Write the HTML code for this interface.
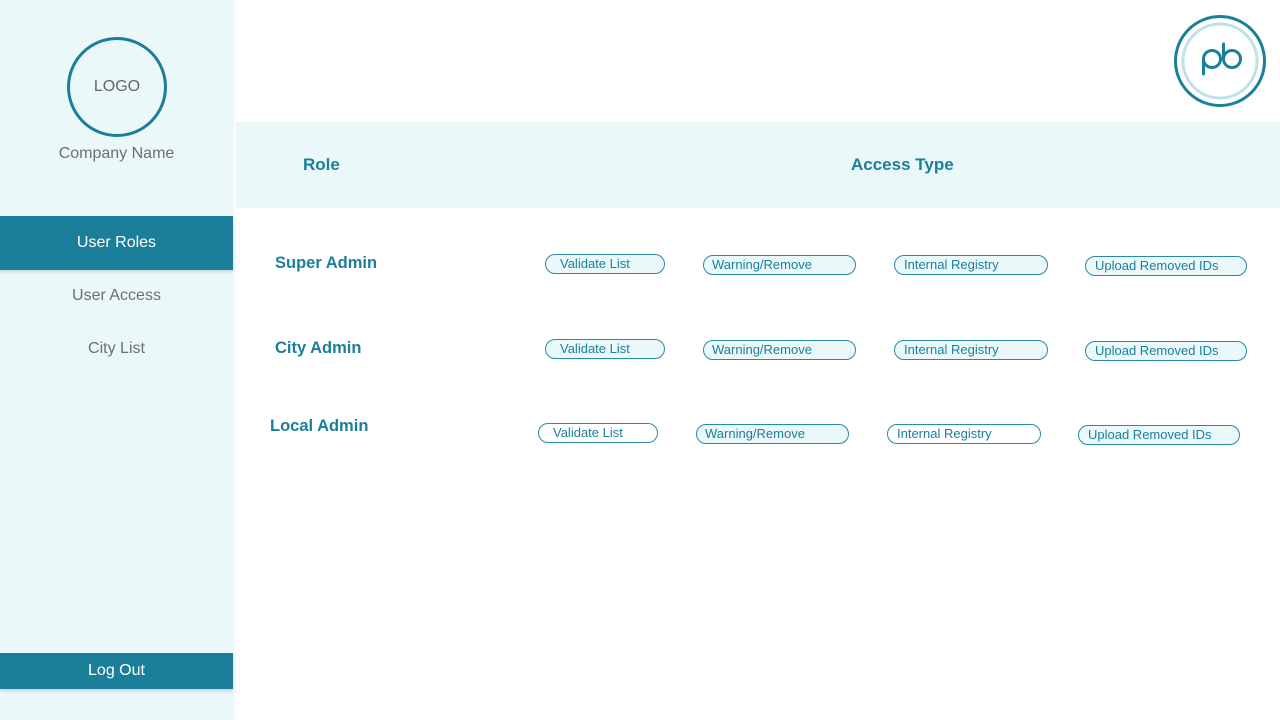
<!DOCTYPE html>
<html><head><meta charset="utf-8"><style>
*{margin:0;padding:0;box-sizing:border-box}
body{width:1280px;height:720px;position:relative;background:#fff;font-family:"Liberation Sans",sans-serif;overflow:hidden}
.a{position:absolute}
.side{left:0;top:0;width:233px;height:720px;background:#eaf8fa;box-shadow:2px 0 3px rgba(0,0,0,0.04)}
.logo{left:67px;top:37px;width:100px;height:100px;border:3px solid #1b7f99;border-radius:50%;color:#666;font-size:16px;display:flex;align-items:center;justify-content:center}
.cn{left:0;width:233px;top:145px;text-align:center;color:#6e6e6e;font-size:16px}
.nav{left:0;width:233px;text-align:center;font-size:16px;color:#6e6e6e}
.act{background:#1b7f99;color:#fff;box-shadow:0 2px 3px rgba(0,0,0,0.15)}
.hdr{left:236px;top:122px;width:1044px;height:86px;background:#eaf8fa}
.h{color:#1b7f99;font-weight:bold;font-size:17px}
.r{color:#1b7f99;font-weight:bold;font-size:16.5px}
.p{height:20px;border:1px solid #2a8aa3;border-radius:10px;background:#eaf8fa;color:#1b7f99;font-size:13px;padding-left:14px;line-height:18px;white-space:nowrap}
</style></head><body>
<div class="a side"></div>
<div class="a logo">LOGO</div>
<div class="a cn">Company Name</div>
<div class="a nav act" style="top:216px;height:54px;line-height:54px">User Roles</div>
<div class="a nav" style="top:287px">User Access</div>
<div class="a nav" style="top:340px">City List</div>
<div class="a nav act" style="top:653px;height:36px;line-height:36px">Log Out</div>

<svg class="a" style="left:1173px;top:14px" width="94" height="94" viewBox="0 0 94 94">
<circle cx="47" cy="47" r="44.5" fill="none" stroke="#1b7f99" stroke-width="3"/>
<circle cx="47" cy="47" r="37" fill="none" stroke="#bfe2ea" stroke-width="3"/>
<path d="M30.5 45 V60" stroke="#1b7f99" stroke-width="3" fill="none" stroke-linecap="round"/>
<circle cx="39" cy="45" r="8.5" fill="none" stroke="#1b7f99" stroke-width="3"/>
<path d="M50.5 30 V45" stroke="#1b7f99" stroke-width="3" fill="none" stroke-linecap="round"/>
<circle cx="59" cy="45" r="8.5" fill="none" stroke="#1b7f99" stroke-width="3"/>
</svg>

<div class="a hdr"></div>
<div class="a h" style="left:303px;top:155px">Role</div>
<div class="a h" style="left:851px;top:155px">Access Type</div>

<div class="a r" style="left:275px;top:254px">Super Admin</div>
<div class="a r" style="left:275px;top:339px">City Admin</div>
<div class="a r" style="left:270px;top:417px">Local Admin</div>

<div class="a p" style="left:545px;top:254px;width:120px">Validate List</div>
<div class="a p" style="left:703px;top:255px;width:153px;padding-left:8px">Warning/Remove</div>
<div class="a p" style="left:894px;top:255px;width:154px;padding-left:9px">Internal Registry</div>
<div class="a p" style="left:1085px;top:256px;width:162px;padding-left:9px">Upload Removed IDs</div>

<div class="a p" style="left:545px;top:339px;width:120px">Validate List</div>
<div class="a p" style="left:703px;top:340px;width:153px;padding-left:8px">Warning/Remove</div>
<div class="a p" style="left:894px;top:340px;width:154px;padding-left:9px">Internal Registry</div>
<div class="a p" style="left:1085px;top:341px;width:162px;padding-left:9px">Upload Removed IDs</div>

<div class="a p" style="left:538px;top:423px;width:120px;background:#fff">Validate List</div>
<div class="a p" style="left:696px;top:424px;width:153px;padding-left:8px">Warning/Remove</div>
<div class="a p" style="left:887px;top:424px;width:154px;padding-left:9px;background:#fff">Internal Registry</div>
<div class="a p" style="left:1078px;top:425px;width:162px;padding-left:9px">Upload Removed IDs</div>
</body></html>
